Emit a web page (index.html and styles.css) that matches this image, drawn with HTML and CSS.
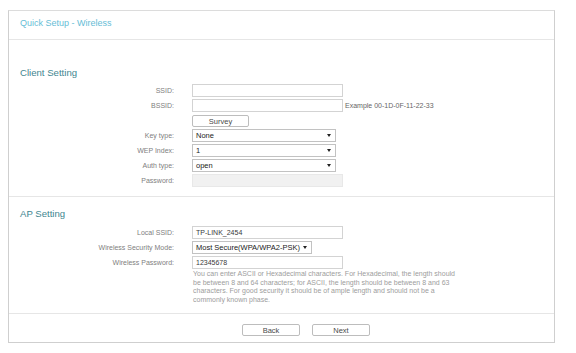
FILE: index.html
```html
<!DOCTYPE html>
<html>
<head>
<meta charset="utf-8">
<link rel="stylesheet" href="styles.css">
</head>
<body>
<div class="panel">
  <div class="header"><span class="title">Quick Setup - Wireless</span></div>

  <div class="section client">
    <div class="heading">Client Setting</div>
    <div class="form">
      <label class="lbl">SSID:</label>
      <div class="field"><span class="input"></span></div>

      <label class="lbl">BSSID:</label>
      <div class="field"><span class="input"></span><span class="note">Example 00-1D-0F-11-22-33</span></div>

      <span class="lbl"></span>
      <div class="field"><span class="btn survey">Survey</span></div>

      <label class="lbl">Key type:</label>
      <div class="field"><span class="select wide"><span class="val">None</span><span class="arrow"></span></span></div>

      <label class="lbl">WEP Index:</label>
      <div class="field"><span class="select wide"><span class="val">1</span><span class="arrow"></span></span></div>

      <label class="lbl">Auth type:</label>
      <div class="field"><span class="select wide"><span class="val">open</span><span class="arrow"></span></span></div>

      <label class="lbl">Password:</label>
      <div class="field"><span class="input disabled"></span></div>
    </div>
  </div>

  <div class="section ap">
    <div class="heading">AP Setting</div>
    <div class="form">
      <label class="lbl">Local SSID:</label>
      <div class="field"><span class="input">TP-LINK_2454</span></div>

      <label class="lbl">Wireless Security Mode:</label>
      <div class="field"><span class="select mode"><span class="val">Most Secure(WPA/WPA2-PSK)</span><span class="arrow"></span></span></div>

      <label class="lbl">Wireless Password:</label>
      <div class="field"><span class="input">12345678</span></div>

      <span class="lbl"></span>
      <p class="hint">You can enter ASCII or Hexadecimal characters. For Hexadecimal, the length should<br>be between 8 and 64 characters; for ASCII, the length should be between 8 and 63<br>characters. For good security it should be of ample length and should not be a<br>commonly known phase.</p>
    </div>
  </div>

  <div class="footer">
    <span class="btn nav">Back</span>
    <span class="btn nav">Next</span>
  </div>
</div>
</body>
</html>
```

FILE: styles.css
```css
* { box-sizing: border-box; }

body {
  margin: 0;
  background: #ffffff;
  font-family: "Liberation Sans", Arial, sans-serif;
}

.panel {
  margin: 10px 0 0 8px;
  width: 547px;
  border: 1px solid #cfcfcf;
  border-top-color: #dcdcdc;
  background: #fff;
}

.header {
  height: 29px;
  border-bottom: 1px solid #e6e6e6;
  padding-left: 11px;
}

.title {
  display: block;
  line-height: 24px;
  font-size: 9px;
  color: #66bdd6;
}

.section {
  border-bottom: 1px solid #e6e6e6;
}

.client { padding: 27px 0 9px 0; }
.ap { padding: 11px 0 9px 0; }

.heading {
  padding-left: 11px;
  font-size: 9.6px;
  line-height: 12px;
  color: #3f8690;
}

.client .heading { margin-bottom: 5px; }
.ap .heading { margin-bottom: 6px; }

.form {
  display: grid;
  grid-template-columns: 165px auto;
  column-gap: 18px;
  row-gap: 2px;
  grid-auto-rows: 13px;
}

.ap .form { grid-auto-rows: auto; }

.lbl {
  display: flex;
  align-items: center;
  justify-content: flex-end;
  height: 13px;
  font-size: 7px;
  color: #808080;
  white-space: nowrap;
}

.field {
  display: flex;
  align-items: center;
  height: 13px;
}

.input {
  display: flex;
  align-items: center;
  width: 151px;
  height: 13px;
  border: 1px solid #d3d3d3;
  padding: 0 3px;
  font-size: 7px;
  color: #3a3a3a;
  background: #fff;
}

.input.disabled {
  background: #f1f1f1;
  border-color: #e8e8e8;
}

.note {
  margin-left: 2px;
  font-size: 7px;
  color: #666;
  white-space: nowrap;
}

.btn {
  display: flex;
  align-items: center;
  justify-content: center;
  height: 12px;
  border: 1px solid #bdbdbd;
  border-radius: 2px;
  background: #fff;
  font-size: 7.5px;
  color: #4a4a4a;
}

.survey { width: 57px; margin-top: 1px; }

.select {
  display: flex;
  align-items: center;
  justify-content: space-between;
  height: 13px;
  border: 1px solid #c2c2c2;
  padding: 0 4px 0 3px;
  background: #fff;
  font-size: 7.5px;
  color: #222;
}

.select.wide { width: 144px; }
.select.mode { width: 120px; }

.arrow {
  width: 0;
  height: 0;
  border-left: 2px solid transparent;
  border-right: 2px solid transparent;
  border-top: 3px solid #222;
}

.hint {
  margin: -1px 0 0 0;
  padding-left: 1px;
  font-size: 7px;
  line-height: 8.5px;
  color: #9d9d9d;
  white-space: nowrap;
}

.footer {
  display: flex;
  gap: 12px;
  padding: 10px 0 6px 233px;
  height: 28px;
}

.nav { width: 58px; }
```
